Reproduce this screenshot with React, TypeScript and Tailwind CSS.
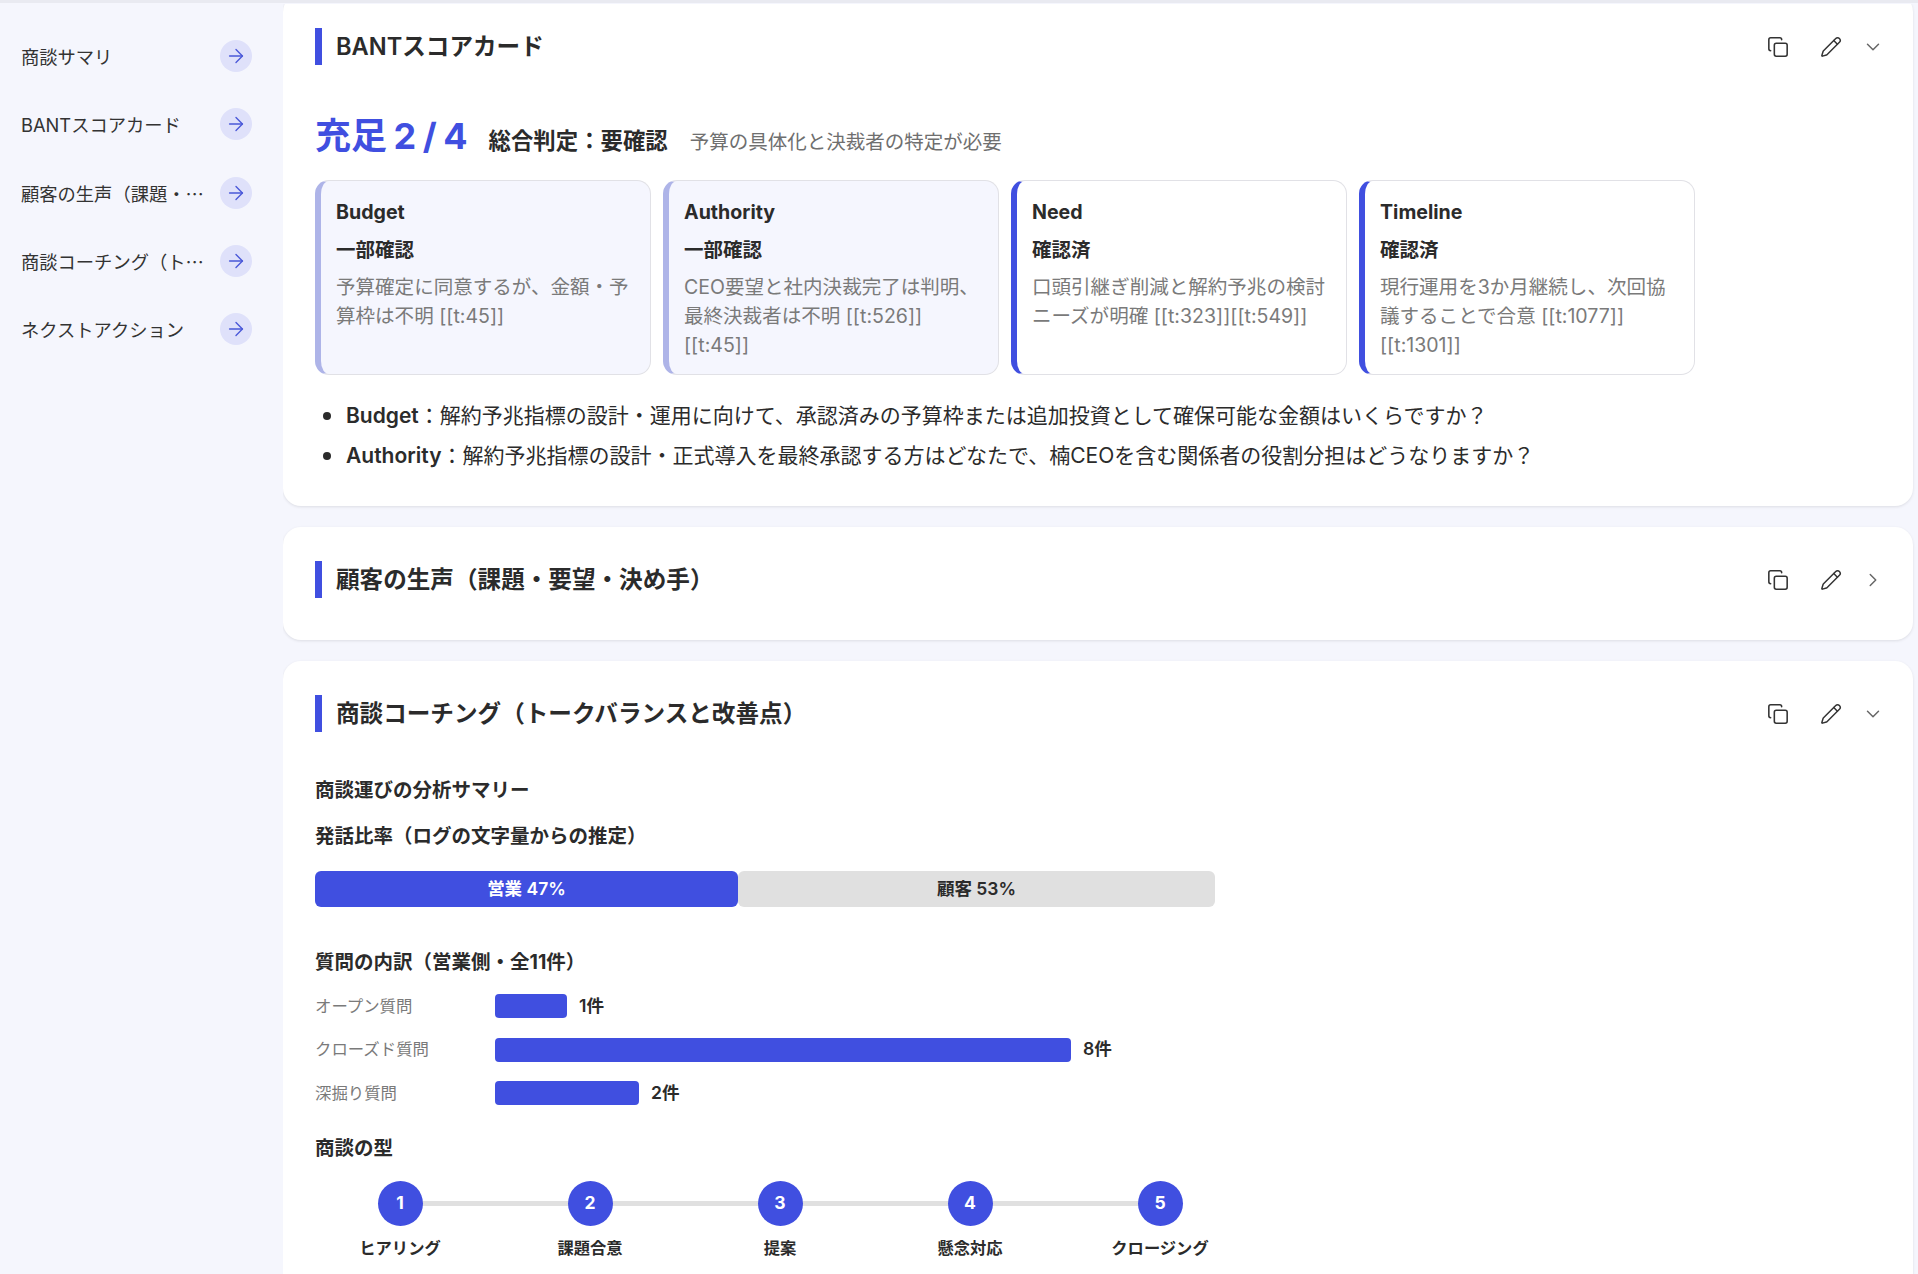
import { ArrowRight, ChevronDown, ChevronRight, Copy, Pencil } from "lucide-react"
import type { ReactNode } from "react"

const navItems = [
  "商談サマリ",
  "BANTスコアカード",
  "顧客の生声（課題・要望・決め手）",
  "商談コーチング（トークバランスと改善点）",
  "ネクストアクション",
]

const bantCards = [
  { name: "Budget", status: "一部確認", note: "予算確定に同意するが、金額・予算枠は不明 [[t:45]]", partial: true },
  { name: "Authority", status: "一部確認", note: "CEO要望と社内決裁完了は判明、最終決裁者は不明 [[t:526]] [[t:45]]", partial: true },
  { name: "Need", status: "確認済", note: "口頭引継ぎ削減と解約予兆の検討ニーズが明確 [[t:323]][[t:549]]", partial: false },
  { name: "Timeline", status: "確認済", note: "現行運用を3か月継続し、次回協議することで合意 [[t:1077]] [[t:1301]]", partial: false },
]

const openQuestions = [
  { key: "Budget", text: "：解約予兆指標の設計・運用に向けて、承認済みの予算枠または追加投資として確保可能な金額はいくらですか？" },
  { key: "Authority", text: "：解約予兆指標の設計・正式導入を最終承認する方はどなたで、楠CEOを含む関係者の役割分担はどうなりますか？" },
]

const questions = [
  { label: "オープン質問", count: 1 },
  { label: "クローズド質問", count: 8 },
  { label: "深掘り質問", count: 2 },
]

const steps = ["ヒアリング", "課題合意", "提案", "懸念対応", "クロージング"]

function SectionHeader({ title, open = true }: { title: string; open?: boolean }) {
  return (
    <div className="flex items-center h-[37px] pr-[29px]">
      <div className="w-[7px] h-[37px] bg-[#404fe0] shrink-0" />
      <h2 className="ml-[14px] flex-1 text-[23.6px] leading-[39px] font-semibold text-[#2b2b2b]">{title}</h2>
      <div className="flex items-center gap-[31px] text-[#333333]">
        <Copy size={22} strokeWidth={1.7} />
        <Pencil size={22} strokeWidth={1.6} />
      </div>
      <div className="ml-[20px] text-[#666666]">
        {open ? <ChevronDown size={22} strokeWidth={1.6} /> : <ChevronRight size={22} strokeWidth={1.6} />}
      </div>
    </div>
  )
}

function Card({ children, className }: { children: ReactNode; className: string }) {
  return (
    <section className={`bg-white rounded-[18px] shadow-[0_1px_3px_rgba(0,0,0,0.1)] pl-[32px] pt-[34px] ${className}`}>
      {children}
    </section>
  )
}

function SubHeading({ children, className }: { children: ReactNode; className: string }) {
  return <h3 className={`text-[19.5px] leading-[28px] font-bold text-[#2b2b2b] ${className}`}>{children}</h3>
}

export default function App() {
  return (
    <div className="h-[1274px] overflow-hidden flex flex-col bg-[#f5f6fd] font-['Inter','Noto_Sans_CJK_JP',sans-serif]">
      <div className="h-[4px] shrink-0 bg-[#f5f6fd] border-t-[3px] border-[#e9eaf1]" />
      <div className="flex flex-1 min-h-0">
        {/* Side nav */}
        <nav className="w-[283px] shrink-0 pt-[18px]">
          {navItems.map((item) => (
            <div key={item} className="flex items-center h-[68.25px] pl-[21px]">
              {/* ellipsis takes the outer font, so it comes out full width like the reference */}
              <span className="w-[185px] truncate text-[18.3px] leading-[30px] pt-[1px] text-[#333333] font-['Noto_Sans_CJK_JP',sans-serif]">
                <span className="font-['Inter','Noto_Sans_CJK_JP',sans-serif]">{item}</span>
              </span>
              <span className="ml-[14px] w-[32px] h-[32px] rounded-full bg-[#dfe1fa] flex items-center justify-center text-[#4a58d8]">
                <ArrowRight size={22} strokeWidth={1.5} />
              </span>
            </div>
          ))}
        </nav>

        {/* Cards */}
        <main className="flex-1 min-w-0 pr-[5px] overflow-hidden">
          <div className="-mt-[10px] flex flex-col gap-[21px]">
            <Card className="pb-[35px]">
              <SectionHeader title="BANTスコアカード" />

              <div className="mt-[49px] flex items-baseline h-[44px]">
                <span className="text-[36px] leading-[44px] font-bold text-[#404fe0] [word-spacing:-2px]">充足 2 / 4</span>
                <span className="ml-[21px] text-[22.4px] font-bold text-[#2b2b2b]">総合判定：要確認</span>
                <span className="ml-[22px] text-[19.5px] text-[#6f6f6f]">予算の具体化と決裁者の特定が必要</span>
              </div>

              <div className="mt-[22px] flex gap-[12px]">
                {bantCards.map((c) => (
                  <div
                    key={c.name}
                    className={`w-[336px] h-[195px] rounded-[14px] border border-[#e1e1e6] border-l-[6px] pl-[15px] pr-[16px] pt-[17px] ${
                      c.partial ? "bg-[#f5f6fe] border-l-[#aeb4e8]" : "bg-white border-l-[#404fe0]"
                    }`}
                  >
                    <div className="text-[19.6px] leading-[28px] font-bold text-[#2b2b2b]">{c.name}</div>
                    <div className="mt-[10px] text-[19.5px] leading-[28px] font-bold text-[#2b2b2b]">{c.status}</div>
                    <p className="mt-[9px] text-[19.55px] leading-[29px] text-[#7a7a7a]">{c.note}</p>
                  </div>
                ))}
              </div>

              <ul className="mt-[26px] flex flex-col gap-[10px] text-[21px] leading-[30px] text-[#2b2b2b]">
                {openQuestions.map((q) => (
                  <li key={q.key} className="flex items-center">
                    <span className="ml-[8px] mr-[15px] w-[8px] h-[8px] rounded-full bg-[#2b2b2b] shrink-0" />
                    <span>
                      <span className="font-semibold">{q.key}</span>
                      {q.text}
                    </span>
                  </li>
                ))}
              </ul>
            </Card>

            <Card className="pb-[42px]">
              <SectionHeader title="顧客の生声（課題・要望・決め手）" open={false} />
            </Card>

            <Card className="pb-[40px]">
              <SectionHeader title="商談コーチング（トークバランスと改善点）" />

              <SubHeading className="mt-[44px]">商談運びの分析サマリー</SubHeading>
              <SubHeading className="mt-[18px]">発話比率（ログの文字量からの推定）</SubHeading>

              <div className="mt-[21px] w-[900px] h-[36px] flex text-[17.5px] font-semibold">
                <div className="w-[47%] bg-[#404fe0] rounded-[6px] flex items-center justify-center text-white">営業 47%</div>
                <div className="flex-1 bg-[#e0e0e0] rounded-[6px] flex items-center justify-center text-[#2b2b2b]">顧客 53%</div>
              </div>

              <SubHeading className="mt-[41px]">質問の内訳（営業側・全11件）</SubHeading>

              <div className="mt-[18px] flex flex-col gap-[19.5px]">
                {questions.map((q) => (
                  <div key={q.label} className="flex items-center h-[24px]">
                    <span className="w-[180px] shrink-0 text-[16.4px] text-[#7a7a7a]">{q.label}</span>
                    <div className="h-[24px] bg-[#404fe0] rounded-[4px]" style={{ width: q.count * 72 }} />
                    <span className="ml-[12px] text-[17.6px] font-semibold text-[#2b2b2b]">{q.count}件</span>
                  </div>
                ))}
              </div>

              <SubHeading className="mt-[29px]">商談の型</SubHeading>

              <div className="mt-[19px] -ml-[10px] flex">
                {steps.map((s, i) => (
                  <div key={s} className="relative w-[190px] flex flex-col items-center">
                    {i < steps.length - 1 && (
                      <div className="absolute left-1/2 top-[20px] w-full h-[5px] bg-[#e0e0e0]" />
                    )}
                    <div className="relative w-[45px] h-[45px] rounded-full bg-[#404fe0] text-white flex items-center justify-center text-[17.5px] font-bold">
                      {i + 1}
                    </div>
                    <div className="mt-[10px] text-[16.3px] leading-[24px] font-semibold text-[#2b2b2b]">{s}</div>
                  </div>
                ))}
              </div>
            </Card>
          </div>
        </main>
      </div>
    </div>
  )
}
